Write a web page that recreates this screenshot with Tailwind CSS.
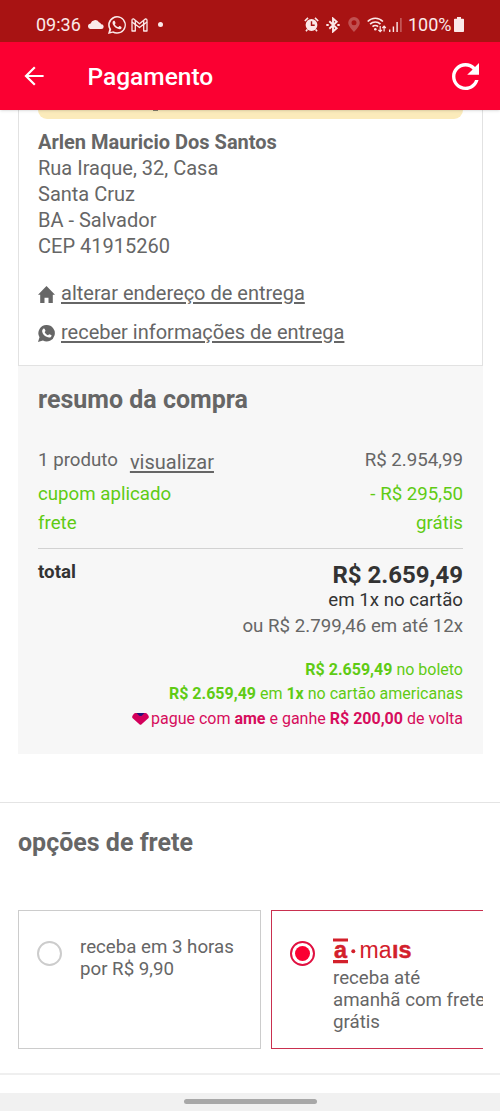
<!DOCTYPE html>
<html lang="pt-BR">
<head>
<meta charset="utf-8">
<title>Pagamento</title>
<script src="https://cdn.jsdelivr.net/npm/@tailwindcss/browser@4"></script>
</head>
<body class="w-[500px] h-[1111px] overflow-hidden bg-white font-['Roboto',sans-serif] text-[#666] text-[18.7px] flex flex-col">
<header class="shrink-0 text-white relative z-10 shadow-sm">
  <div class="h-[42px] bg-[#a81313] text-[#fbe9e9] flex items-center pt-2 pl-9 pr-9">
    <span class="w-[46px] text-[18px] leading-[34px] whitespace-nowrap">09:36</span>
    <svg class="w-4 h-[10px] ml-[5.5px] -mt-0.5" viewBox="0 0 16 10" fill="currentColor"><path d="M3 10A2.8 2.8 0 0 1 2.6 4.4 4.7 4.7 0 0 1 11 3.2a3.5 3.5 0 0 1 2.2 2A2.4 2.4 0 0 1 13.300 10z"/></svg>
    <svg class="w-[18px] h-[18px] ml-[4px] -mt-px" viewBox="0 0 24 24" fill="currentColor"><path d="M17.500 14.400c-.3-.15-1.760-.87-2.030-.97-.27-.1-.47-.15-.67.15-.2.300-.77.970-.94 1.160-.17.200-.35.220-.64.080-.3-.15-1.260-.46-2.390-1.480-.88-.79-1.480-1.760-1.650-2.060-.17-.3-.02-.46.130-.6.130-.14.300-.35.450-.52.150-.18.200-.3.300-.5.100-.2.050-.37-.03-.52-.07-.15-.67-1.610-.91-2.210-.25-.58-.49-.5-.67-.51h-.57c-.2 0-.52.070-.79.370-.27.300-1.040 1.020-1.040 2.480s1.070 2.880 1.210 3.070c.15.200 2.100 3.200 5.080 4.490 2.980 1.200 2.980.8 3.520.75.540-.05 1.760-.72 2-1.410.25-.7.250-1.290.18-1.410-.07-.13-.27-.2-.57-.35zM12 0A11.900 11.900 0 0 0 1.700 17.800L0 24l6.300-1.650A11.900 11.900 0 1 0 12 0zm0 21.800a9.900 9.900 0 0 1-5-1.400l-3.700 1 1-3.600A9.900 9.900 0 1 1 12 21.800z"/></svg>
    <svg class="w-[17px] h-[14px] ml-[5px] -mt-px" viewBox="0 0 17 14" fill="none" stroke="currentColor" stroke-width="1.300" stroke-linejoin="round"><path d="M1 2.200Q1 .8 2.400.8L8.500 5.800 14.600.8Q16 .8 16 2.200V13H12.700V6.200L8.500 9.600 4.300 6.200V13H1z"/><path d="M4.300 6.200V2.400M12.700 6.200V2.400M1 4l3.300 2.500M16 4l-3.300 2.500"/></svg>
    <span class="w-[5px] h-[5px] rounded-full bg-[#fbe9e9] ml-[10.5px] -mt-px"></span>
    <div class="flex items-center ml-auto -mt-px">
      <svg class="w-[15px] h-[15px]" viewBox="0 0 15 15"><path d="M.8 4L4 .9M14.200 4L11 .9M3.300 12.500L2 14.300M11.700 12.500l1.300 1.800" stroke="currentColor" stroke-width="1.600"/><circle cx="7.500" cy="8" r="5.900" fill="currentColor"/><path d="M7.500 4.200v4h3.200" fill="none" stroke="#a81313" stroke-width="1.400"/></svg>
      <svg class="w-[14px] h-[16px] ml-[7px]" viewBox="0 0 14 16" fill="none" stroke="currentColor" stroke-width="1.900"><path d="M3.300 4.200l7.400 7-3.700 3.300v-13l3.700 3.300-7.400 7"/><path d="M.3 8h2.400M11.300 8h2.400"/></svg>
      <svg class="w-3 h-[15px] ml-2 text-[#c05050]" viewBox="0 0 12 15" fill="currentColor" fill-rule="evenodd"><path d="M6 0A5.800 5.800 0 0 0 .2 5.800C.2 9.500 6 15 6 15s5.800-5.500 5.800-9.200A5.800 5.800 0 0 0 6 0zm0 3.200a2.500 2.500 0 1 1 0 5 2.500 2.500 0 0 1 0-5z"/></svg>
      <svg class="w-[20px] h-[16px] ml-[6.500px]" viewBox="0 0 20 16" fill="none" stroke="currentColor" stroke-width="1.700"><path d="M.7 4.500a10.500 10.500 0 0 1 15.200 0M3.100 7.200a7.300 7.300 0 0 1 10.400 0M5.500 9.700a4 4 0 0 1 5.600 0"/><circle cx="8.300" cy="12.300" r="1.300" fill="currentColor" stroke="none"/><path d="M13.200 9v5.500M11.400 12.800l1.800 1.900 1.800-1.900M17.100 14.500V9.300M15.400 11l1.700-1.900L18.800 11" stroke-width="1.200"/></svg>
      <svg class="w-[13px] h-[15px] ml-[2.500px]" viewBox="0 0 13 15" fill="currentColor"><path d="M0 12.500h1.400V15H0zM3.700 9.500h1.400V15H3.700zM7.400 5h1.400v10H7.400z"/><path d="M11.200 1h1.400v14h-1.400z" opacity=".4"/></svg>
      <span class="w-[44px] ml-[6px] mt-px text-[18px] leading-[34px] whitespace-nowrap">100%</span>
      <svg class="w-[10px] h-[15px] ml-[2px]" viewBox="0 0 10 15" fill="currentColor"><path d="M3 0h4v1.700h2.200q.8 0 .8.800v11.700q0 .8-.8.800H.8q-.8 0-.8-.8V2.500q0-.8.800-.8H3z"/></svg>
    </div>
  </div>
  <div class="h-[68px] bg-[#fb0032] flex items-center pl-6 pr-[21px]">
    <svg class="w-5 h-5" viewBox="0 0 20 20" fill="none" stroke="currentColor" stroke-width="2.200"><path d="M19.600 10H2M10.800 1.300L2 10l8.800 8.700"/></svg>
    <h1 class="ml-[43.5px] mt-0.5 text-[24.5px] leading-[30px] font-medium">Pagamento</h1>
    <svg class="w-[27px] h-[27px] ml-auto" viewBox="4 4 16 16" fill="currentColor"><path d="M17.650 6.350C16.200 4.900 14.210 4 12 4c-4.420 0-7.990 3.580-7.990 8s3.570 8 7.990 8c3.730 0 6.840-2.550 7.730-6h-2.080c-.82 2.330-3.040 4-5.650 4-3.310 0-6-2.690-6-6s2.690-6 6-6c1.660 0 3.140.69 4.220 1.780L13 11h7V4l-2.350 2.350z"/></svg>
  </div>
</header>

<main class="shrink-0 pl-[18px] pr-[17px]">
  <section class="h-[255.5px] border border-t-0 border-[#e2e2e2] px-[19px] text-[20px]">
    <div class="h-[9px] bg-[#fbebbb] rounded-b-[14px] pl-[115px]"><div class="w-[5px] h-px bg-[#877f6c]"></div></div>
    <address class="not-italic mt-[11px] leading-[25.95px]">
      <strong class="block font-bold">Arlen Mauricio Dos Santos</strong>
      <p>Rua Iraque, 32, Casa</p><p>Santa Cruz</p><p>BA - Salvador</p><p>CEP 41915260</p>
    </address>
    <div class="mt-[20px] h-[26px] leading-[26px] flex items-center">
      <svg class="w-[17px] h-[17px] mt-1" viewBox="0 0 17 17" fill="currentColor"><path d="M8.500 0L17 8.700h-2.200V17h-4.300v-5.200h-4V17H2.200V8.700H0z"/></svg>
      <a class="ml-[6px] underline underline-offset-2">alterar endereço de entrega</a>
    </div>
    <div class="mt-[13px] h-[26px] leading-[26px] flex items-center">
      <svg class="w-[17px] h-[17px] mt-1" viewBox="0 0 17 17"><path d="M8.800 0a8.200 8.200 0 1 1-3.900 15.500L0 17l1.500-4.700A8.200 8.200 0 0 1 8.800 0z" fill="#666"/><path d="M5.300 3.800c.8-.5 1.300-.1 1.500.4l.7 1.600c.1.500-.7 1-.8 1.400.7 1.500 1.800 2.400 3.200 3 .5 0 .9-1 1.400-1l1.900.9c.5.300.3 1-.1 1.600-1 1.200-2.700 1-4.500.1-2.200-1-4.100-3.200-4.400-5.100-.2-1.200.4-2.400 1.100-2.900z" fill="#fff"/></svg>
      <a class="ml-[6px] underline underline-offset-2">receber informações de entrega</a>
    </div>
  </section>

  <section class="h-[388px] bg-[#f7f7f7] px-5 pt-[18.5px]">
    <h2 class="h-[32px] leading-[32px] text-[25px] font-bold">resumo da compra</h2>
    <div class="mt-[31px] h-[26px] leading-[27px] flex"><span>1 produto</span><a class="ml-3 mt-[2px] text-[20px] underline underline-offset-2">visualizar</a><span class="ml-auto">R$ 2.954,99</span></div>
    <div class="mt-[7.500px] text-[#5fcb14]">
      <div class="h-[29px] leading-[26px] flex justify-between"><span>cupom aplicado</span><span>- R$ 295,50</span></div>
      <div class="h-[29px] leading-[26px] flex justify-between"><span>frete</span><span>grátis</span></div>
    </div>
    <div class="mt-[9px] border-t border-[#d2d2d2] pt-[10px] flex justify-between text-[#333]">
      <strong class="leading-[27px] font-bold">total</strong>
      <div class="text-right leading-[26px]">
        <div class="mt-px h-[27px] leading-[30px] text-[24px] font-bold">R$ 2.659,49</div>
        <div>em 1x no cartão</div>
        <div class="text-[#666]">ou R$ 2.799,46 em até 12x</div>
      </div>
    </div>
    <div class="mt-[19px] text-right text-[16px] leading-[24.5px] text-[#5fcb14]">
      <div><b>R$ 2.659,49</b> no boleto</div>
      <div><b>R$ 2.659,49</b> em <b>1x</b> no cartão americanas</div>
      <div class="text-[#d60d5c] flex justify-end items-center">
        <svg class="w-[17px] h-[12px] mr-[2px]" viewBox="0 0 17 12"><path d="M3.500 0h10Q15 0 16 2q1.500 2 .3 3.200L9.600 11.300q-1.100 1-2.200 0L.7 5.200Q-.5 4 1 2 2 0 3.500 0z" fill="#d3005b"/><path d="M4.500 0h8L10 2.500q-1.500 1.200-3 0z" fill="#26127a"/></svg>
        <span>pague com <b>ame</b> e ganhe <b>R$ 200,00</b> de volta</span>
      </div>
    </div>
  </section>
</main>

<section class="shrink-0 mt-[48.5px] h-[273px] border-t border-b-2 border-t-[#e4e4e4] border-b-[#efefef] pl-[18px] pr-[17px]">
  <h2 class="mt-6 h-[32px] leading-[32px] text-[25px] font-bold">opções de frete</h2>
  <div class="mt-[51px] flex gap-[10px] overflow-hidden h-[139px] leading-[21.8px]">
    <div class="shrink-0 w-[243px] border border-[#ccc] pl-[18px] pt-[26px] flex items-start">
      <span class="shrink-0 w-[25px] h-[25px] mt-[4px] rounded-full border-2 border-[#ccc]"></span>
      <p class="ml-[18px]">receba em 3 horas<br>por R$ 9,90</p>
    </div>
    <div class="shrink-0 w-[243px] border border-[#c9304f] pl-[18px] pt-[26px] flex items-start">
      <span class="shrink-0 w-[25px] h-[25px] mt-[4px] rounded-full border-2 border-[#e01040] flex items-center justify-center"><span class="w-[15px] h-[15px] rounded-full bg-[#fb0032]"></span></span>
      <div class="ml-[18px] whitespace-nowrap">
        <svg class="block w-[80px] h-[30px] mb-px" viewBox="0 0 80 30" fill="#d3202b" font-family="Liberation Sans, sans-serif" font-size="23"><path d="M0 1.500h15v3H0zM0 23h15v3.200H0z"/><text x="1" y="20.500" font-weight="bold" textLength="13" lengthAdjust="spacingAndGlyphs" stroke="#d3202b" stroke-width=".5">a</text><circle cx="20.300" cy="14.300" r="2"/><text x="26.500" y="20.500" textLength="32" lengthAdjust="spacingAndGlyphs">ma</text><text x="59" y="20.500" font-weight="bold" textLength="19.500" lengthAdjust="spacingAndGlyphs" stroke="#d3202b" stroke-width=".4">ıs</text></svg>
        <p>receba até<br>amanhã com frete<br>grátis</p>
      </div>
    </div>
  </div>
</section>
<footer class="mt-auto h-[18px] shrink-0 bg-[#f1f1f1] flex justify-center pt-[6px]"><div class="w-[133px] h-[5px] rounded-full bg-[#a8a8a8]"></div></footer>
</body>
</html>
